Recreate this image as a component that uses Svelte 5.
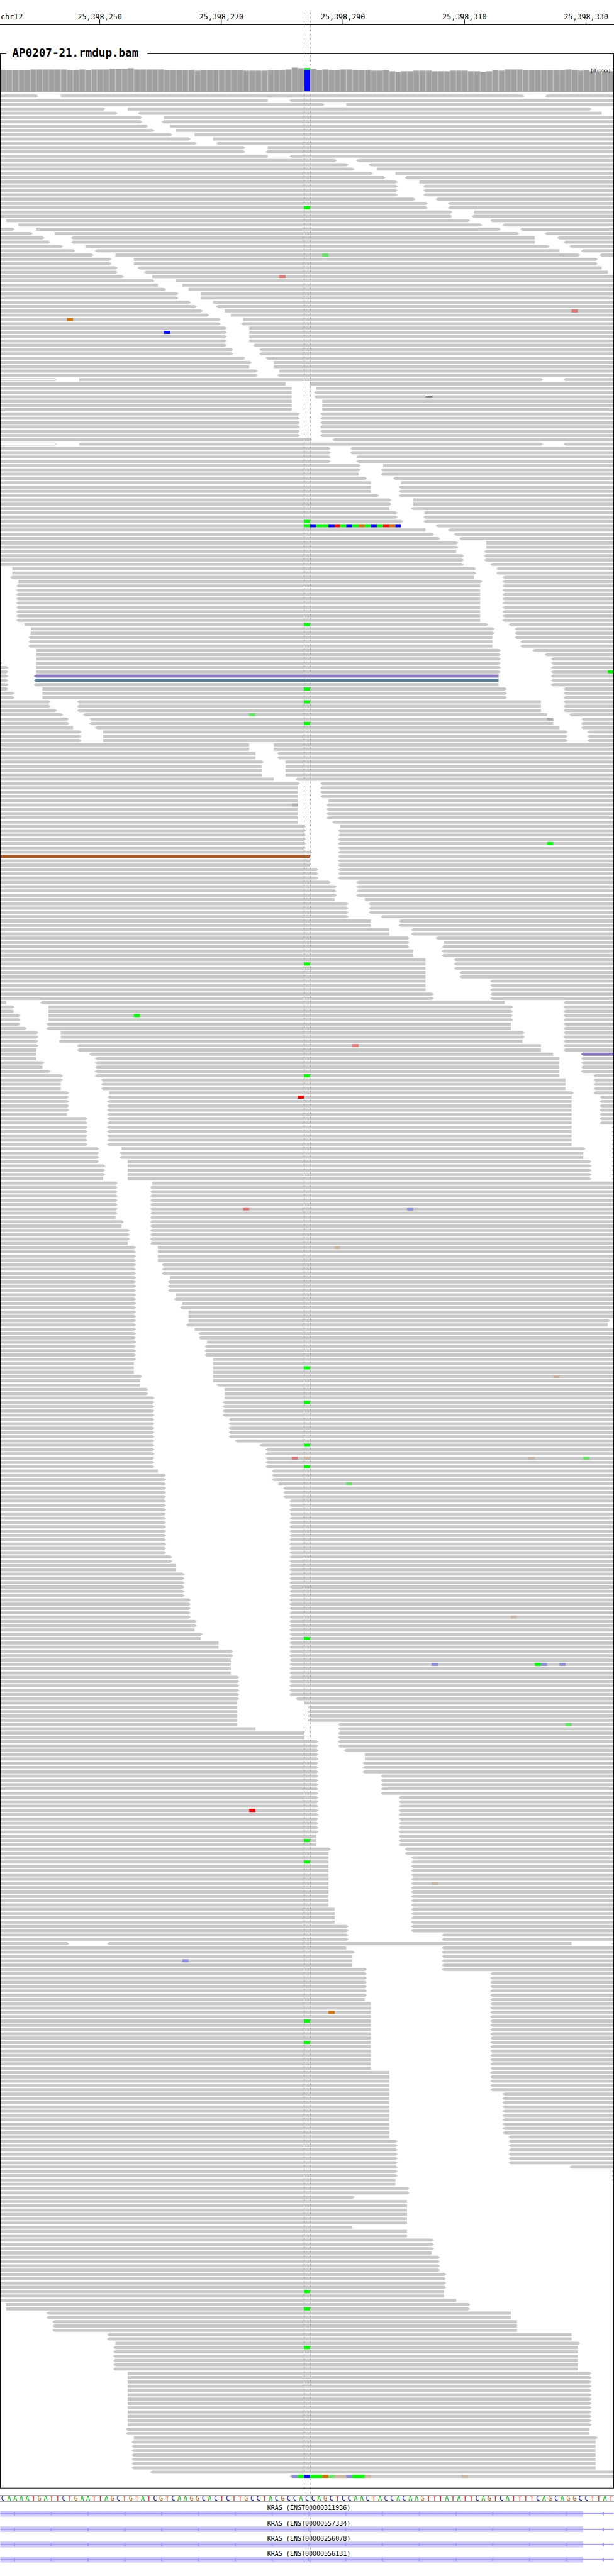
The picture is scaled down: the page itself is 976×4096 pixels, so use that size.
<script>
  const BASES = 101;
  const WIDTH = 1000;
  const x = (base) => Math.round((base * WIDTH) / BASES);

  const ticks = [
    { at: 162.5, label: '25,398,250' },
    { at: 360.5, label: '25,398,270' },
    { at: 558.5, label: '25,398,290' },
    { at: 756.5, label: '25,398,310' },
    { at: 954.5, label: '25,398,330' }
  ];

  // Coverage: [number of bases, top of the column]
  const coverageRuns = [
    [5, 114], [6, 113], [2, 114], [1, 113], [1, 114], [3, 113], [3, 112], [1, 111],
    [5, 113], [5, 114], [1, 115], [7, 114], [4, 115], [3, 114], [1, 113], [1, 110],
    [1, 111], [1, 111], [1, 112], [1, 114], [1, 113], [2, 114], [2, 113], [3, 114],
    [2, 115], [1, 114], [1, 116], [1, 117], [2, 116], [3, 115], [3, 116], [3, 115],
    [2, 116], [1, 117], [1, 116], [1, 114], [1, 115], [3, 113], [7, 114], [1, 113],
    [1, 114], [1, 115], [1, 114], [4, 116]
  ];
  const coverage = coverageRuns.flatMap(([n, top]) => Array(n).fill(top));

  // Pile-up rows: "count*gap gap". A gap is "end-start"; > and < mark the read's direction.
  const pile = `
6>-10 86>-<90|44-<48|53>-57|17>-21 97>-<101|19>-<23 99-|23>-27|23>-<27|24>-28|25>-29|28>-32|31>-35|32>-<36
40>-44|40>-<44|44-<48|55>-<59|57>-<61|58>-62|61>-65|63>-<67|65>-69|3*65>-<70|68>-<72|2*70>-<74|74>-78|74>-<78
-1 77>-<81|-3 79>-<83|2>-6 82>-<86|5>-9 85>-<90|7>-<12 88-<92|8>-<12 88-<93|10>-14 90>-<94|12>-<16 92-<96
15>-19 95>-<99|2*18>-22 98>-|19>-<23 99-|19>-<24 100-|20>-25|25>-29|26-30|27>-31|2*29>-33|31>-35|32>-<36
33>-37|34>-38|36>-40|36>-<40|4*37>-41|37>-<42|2*38>-<43|40>-<44|41>-45|41-45|42>-46|42>-<46|9>-13 89>-<93
47-51|48-52|2*48-<52|3*48-53|6*49>-<53|51>-<55|9>-13 89>-<93|2*54>-<58|2*54>-<59|59>-63|59>-<63|59-<63
60>-<65|61-66|2*61-<66|62>-<66|2*64>-68|64-<68|2*65>-<70|66>-<70|66-<72|70-<74|71>-<75|72>-<76
2*75>-80|75-<80|2*76>-<80|76>-<81|2*-2 78>-<82|-<2 78-<83|-3 79>-<83|9*-<3 79-<83|-4 80>-<84|2*-5 81>-<85
-<5 81-<85|2*-<5 81-<86|-6 82>-<88|-6 82>-<90|-6 82>-<91|0>-6 82>-<91|2*1>-6 82>-<91|3*1>-<6 82-<91
1>-7 83>-<93|2*2>-7 83>-<93|2*8>-<13 89-<93|9>-<13 89-<93|10>-<14 90-<94|2*11>-<15 91-<96|12-<16 92-<96
3*13>-17 93>-<97|2*41-45|2*42-<46|43>-47|3*43-47|45-<49|49>-<53|3*49-<53|49-54|4*49-<54|49-<55
50>-56|5*50>-<56|51>-<56|3*51-<56|3*52>-<56|54>-<59|3*55>-<59|55-60|3*57>-<61|57>-<63|2*61-<66|2*64-<68
67>-<72|67>-73|67>-<73|2*68-<73|3*70-<75|2*70-<76|3*70-<81|2*71>-<81|1-<7 83-<93|2*2>-8 84>-<93
2*3>-8 84>-<93|3>-<8 84-<93|4>-<8 84-<93|2*6>-10 86>-<93|6>-<10 86-<93|6>-<13 89-<93|6-<13 89-<93
6-<15 91-<96|6-<16 92-<96|7>-<16 92-<96|7-<16 92-<96|8>-<16 92-<96|10>-<16 92-<98|10>-<17 93-<98
2*10-<17 93-<98|11>-18 94>-<98|4*11>-<18 94-<99|11-<18 94-<99|2*14>-<18 94-<99|5*14>-<18 94-<101
16>-20 96>-<101|2*16>-<20 96-<101|16>-21 97>-<101|3*17>-21 97>-<101|17-21 97>-<101|19>-25|7*19>-<25|19-<25
20>-<25|20-<25|3*21>-<25|21-<25|4*22>-26|3*22>-<27|22>-28|3*22>-<28|22>-29|22>-<29|22>-30|22>-<30|2*22>-31
22>-31 100>-|22>-<31 100-|22>-32|2*22>-<33|22>-34|3*22>-<34|22>-35|3*22-35|23>-35|23-35|23-<36|2*24>-37
25>-37|4*25>-<37|5*25>-<38|25>-<39|25>-<43|5*25>-<44|26-<45|2*27>-<45|27>-<46|3*27>-<47|13*27>-<48
2*28>-<48|2*29-<48|6*30>-<48|5*31>-<48|2*32>-<48|32-<48|33>-<48|33-<48|2*36-<48|2*38>-<48|4*38-<48
5*39>-<48|39>-<49|39-50|4*39-<51|39-<56|42-<56|2*50-<56|2*52>-<56|52>-<57|2*52>-60|3*52>-<60|5*52>-<63
9*52>-<66|3*52-<66|54>-<67|54-<67|12*54-<68|4*55-<68|2*57>-<68|2*57>-<73|11>-<18 94-<101|57-<73
58>-<73|3*58-<73|60>-<73|6*60>-<81|60-<81|16*61-<81|5*64-<81|10*64-<83|64-<84|6*65>-<84|65>-<94
2*65>-<101|65-<101|65-|2*67>-|58>-|6*67-|58-|2*67-|3*71>-|71-|4*72>-|4*73>-|2*73-|75-|2*-1 77>-
2*-<8 84-|3*-<9 85-|2*-<18 94-|-19 95>-|6*-<19 95-|13*-21 97>-|2*-<21 97-|-22 98>-|7*-<22 98-|-<25|-<48`;

  const rows = pile.trim().split(/[\n|]/).flatMap((entry) => {
    const [, n, gaps] = entry.match(/^(?:(\d+)\*)?(.*)$/);
    return Array(Number(n || 1)).fill(gaps);
  });

  const rowY = (row) => 154 + row * 7;

  function readsOf(gaps) {
    const reads = [];
    let start = 0;
    let left = false;
    for (const gap of gaps.split(' ')) {
      const [, end, right, nextLeft, next] = gap.match(/^(\d*)(>?)-(<?)(\d*)$/);
      if (end !== '') reads.push({ start, end: Number(end), left, right: right !== '' });
      start = next === '' ? null : Number(next);
      left = nextLeft !== '';
    }
    if (start !== null) reads.push({ start, end: BASES, left, right: false });
    return reads;
  }

  function shape(read, y) {
    return (
      `M${x(read.start)} ${y}H${x(read.end)}` +
      (read.right ? 'l4 2.5l-4 2.5' : 'v5') +
      `H${x(read.start)}` +
      (read.left ? 'l-4 -2.5z' : 'z')
    );
  }

  const tinted = {
    '66:0': 'outline',
    '81:0': 'outline',
    '135:1': 'violet',
    '136:1': 'steel',
    '177:0': 'rust',
    '223:2': 'violet'
  };

  let plain = '';
  const special = [];
  rows.forEach((gaps, row) => {
    const y = rowY(row);
    readsOf(gaps).forEach((read, i) => {
      const kind = tinted[`${row}:${i}`];
      if (kind === 'outline') {
        special.push({ kind, d: `M0 ${y + 0.5}H${x(read.end)}l3 2l-3 2H0` });
      } else if (kind) {
        special.push({ kind, d: shape(read, y) });
      } else {
        plain += shape(read, y);
      }
    });
  });

  // Mismatches: row, first base, one letter for each base (lower case: low quality)
  const mismatches = [
    [37, 53, 'a'], [42, 46, 't'], [50, 94, 't'], [52, 11, 'G'], [55, 27, 'C'],
    [100, 50, 'ACAACTACAGACATGC'], [134, 100, 'A'], [144, 41, 'a'], [145, 90, 'n'],
    [165, 48, 'n'], [174, 90, 'A'], [214, 22, 'A'], [221, 58, 't'], [233, 49, 'T'],
    [259, 40, 't'], [259, 67, 'c'], [268, 55, 'g'], [298, 91, 'g'], [317, 48, 't'],
    [317, 50, 'g'], [317, 87, 'g'], [317, 96, 'a'], [323, 57, 'a'], [354, 84, 'g'],
    [365, 71, 'c'], [365, 88, 'Ac'], [365, 92, 'c'], [379, 93, 'a'], [399, 41, 'T'],
    [416, 71, 'g'], [434, 30, 'c'], [446, 54, 'G'], [554, 48, 'cACAAGaggcAAg'], [554, 76, 'g'],
    ...[26, 99, 123, 138, 141, 146, 202, 228, 296, 304, 314, 319, 359, 406, 411, 448, 453, 511, 515, 524]
      .map((row) => [row, 50, 'A'])
  ];
  const baseColor = {
    A: '#00ff00', C: '#0000ff', G: '#d17105', T: '#ff0000',
    a: '#64e464', c: '#8c8cdc', g: '#c8b4a0', t: '#de7676', n: '#acacac'
  };
  const marks = mismatches.flatMap(([row, base, letters]) =>
    [...letters].map((letter, i) => ({
      x: x(base + i),
      w: x(base + i + 1) - x(base + i),
      y: rowY(row),
      fill: baseColor[letter]
    }))
  );

  const sequence = [
    ...'CAAAATGATTCTGAATTAGCTGTATCGTCAAGGCACTCTTGCCTACGCCA',
    ...'CCAGCTCCAACTACCACAAGTTTATATTCAGTCATTTTCAGCAGGCCTTAT'
  ];

  const genes = [
    'KRAS (ENST00000311936)',
    'KRAS (ENST00000557334)',
    'KRAS (ENST00000256078)',
    'KRAS (ENST00000556131)'
  ];
  const strand = Array.from({ length: 17 }, (_, i) => 20.5 + i * 60);
</script>

<main>
  <svg class="chart" viewBox="0 0 1000 4059" role="img" aria-label="Read alignments on chr12">
    <path class="line" d="M0 39.5H1000" />
    <text class="scale" x="1" y="32">chr12</text>
    {#each ticks as tick}
      <path class="line" d="M{tick.at} 32V39" />
      <text class="scale mid" x={tick.at} y="32">{tick.label}</text>
    {/each}

    <path class="reads" d={plain} />
    {#each special as read}
      <path class={read.kind} d={read.d} />
    {/each}
    <path class="guide" d="M495.5 20V4059M505.5 20V4059" />
    {#each marks as mark}
      <rect x={mark.x} y={mark.y} width={mark.w} height="5" fill={mark.fill} />
    {/each}
    <rect x={x(70)} y={rowY(70)} width="11" height="5" fill="#fff" />
    <rect x={x(70)} y={rowY(70) + 2} width="11" height="2" fill="#000" />

    {#each coverage as top, i}
      {@const left = x(i)}
      {@const w = x(i + 1) - left}
      <rect x={left} y={top} width={w} height={149 - top} fill="#b0b0b0" />
      <rect x={left + 1} y={top + 1} width={w - 2} height={148 - top} fill="#a0a0a0" />
    {/each}
    <rect x="496" y="111" width="9" height="3" fill="#00ff00" />
    <rect x="496" y="114" width="9" height="34" fill="#0000ff" />
    <path class="floor" d="M0 148.5H1000" />
    <text class="range" x="995" y="118">[0-555]</text>

    <path class="line" d="M10 87.5H0.5V4053.5H999.5V87.5H240" />
    <text class="title" x="20" y="92">AP0207-21.rmdup.bam</text>
  </svg>

  <section class="annotation">
    <div class="sequence">
      {#each sequence as letter}
        <span class={letter}>{letter}</span>
      {/each}
    </div>

    <ul>
      {#each genes as gene}
        <li>
          <span>{gene}</span>
          <svg viewBox="0 0 1000 10" aria-hidden="true">
            <rect width="950" height="10" fill="#d2cdff" />
            <rect y="4" width="1000" height="2" fill="#9c98ff" />
            {#each strand as tip}
              <path d="M{tip} 5l3.5 -3.5v7z" fill="#9c98ff" />
            {/each}
          </svg>
        </li>
      {/each}
    </ul>

    <svg class="overlay" viewBox="0 0 1000 116" aria-hidden="true">
      <path class="guide" d="M495.5 0V116M505.5 0V116" />
    </svg>
  </section>
</main>

<style>
  :global(body) {
    margin: 0;
    background: #fff;
  }

  main {
    font-family: 'DejaVu Sans Mono', monospace;
    color: #000;
    overflow: hidden;
    padding-bottom: 20px;
  }

  svg {
    display: block;
    width: 100%;
    height: auto;
  }

  .line {
    fill: none;
    stroke: #000;
  }

  .floor {
    stroke: #777;
  }

  .guide {
    fill: none;
    stroke: #999;
    stroke-dasharray: 3 4;
  }

  .reads {
    fill: #c8c8c8;
  }

  .outline {
    fill: #fff;
    stroke: #c8c8c8;
  }

  .violet {
    fill: #8c78bc;
  }

  .steel {
    fill: #587f98;
  }

  .rust {
    fill: #a85a24;
  }

  .scale {
    font-size: 12px;
  }

  .mid {
    text-anchor: middle;
  }

  .range {
    font-size: 8px;
    text-anchor: end;
  }

  .title {
    font-size: 18px;
    font-weight: 700;
  }

  .annotation {
    position: relative;
    padding-top: 5px;
    font-size: 10px;
  }

  .sequence {
    display: grid;
    grid-template-columns: repeat(101, 1fr);
    border-top: 1px solid #aaa;
    border-bottom: 1px solid #aaa;
    line-height: 9px;
    text-align: center;
  }

  .A {
    color: #009600;
  }

  .C {
    color: #000096;
  }

  .G {
    color: #b0600c;
  }

  .T {
    color: #a80000;
  }

  ul {
    margin: 0;
    padding: 0;
    list-style: none;
  }

  li {
    display: flex;
    flex-direction: column;
    justify-content: flex-end;
    aspect-ratio: 40 / 1;
  }

  li span {
    padding-left: 6px;
    line-height: 9px;
    text-align: center;
  }

  .overlay {
    position: absolute;
    top: 0;
    left: 0;
  }
</style>
